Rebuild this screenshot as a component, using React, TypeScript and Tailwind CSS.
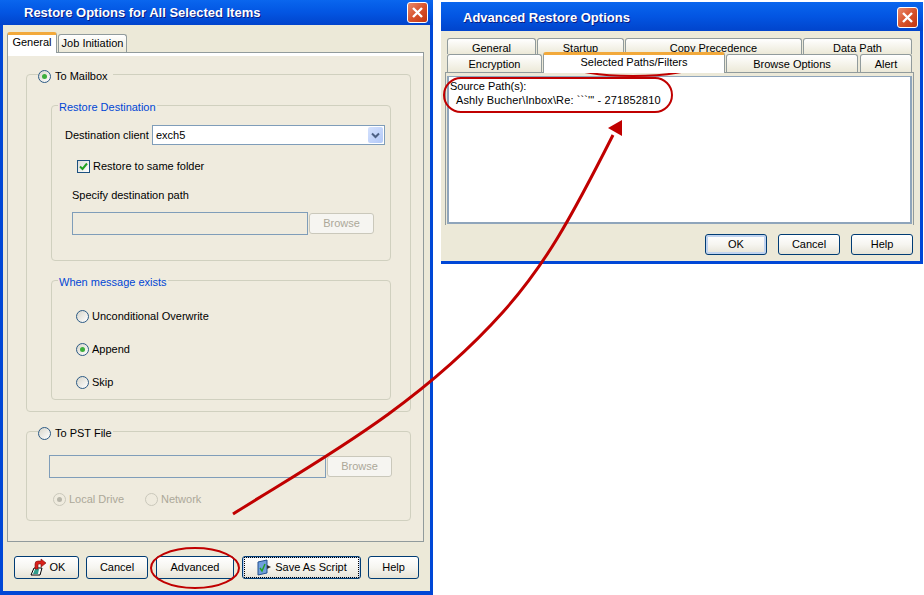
import { ReactNode } from 'react';

const font = 'font-["Liberation_Sans",Arial,sans-serif]';

function CloseButton() {
    return (
        <div className="w-[21px] h-[21px] rounded-[3px] border border-white bg-linear-to-br from-[#e8896a] via-[#d8532c] to-[#c2350d] flex items-center justify-center">
            <svg width="13" height="13" viewBox="0 0 13 13">
                <path d="M2 2 L11 11 M11 2 L2 11" stroke="#fff" strokeWidth="2.4" />
            </svg>
        </div>
    );
}

function TitleBar({ title, className }: { title: string; className: string }) {
    return (
        <div className={`flex items-center justify-between bg-linear-to-b from-[#0a66ee] via-[#0355e2] to-[#0144cc] ${className}`}>
            <span className='font-["Liberation_Sans",Arial,sans-serif] font-bold text-[13px] text-white [text-shadow:1px_1px_0_#0a1a80]'>
                {title}
            </span>
            <CloseButton />
        </div>
    );
}

function Radio({ checked, disabled }: { checked?: boolean; disabled?: boolean }) {
    return (
        <span
            className={`w-[13px] h-[13px] shrink-0 rounded-full border flex items-center justify-center ${
                disabled
                    ? 'border-[#cac8bb] bg-[#efebde]'
                    : 'border-[#2c5a85] bg-linear-to-br from-[#d8d6cb] to-white'
            }`}
        >
            {checked && (
                <span className={`w-[5px] h-[5px] rounded-full ${disabled ? 'bg-[#b8b6aa]' : 'bg-[#3cae3c]'}`} />
            )}
        </span>
    );
}

function RadioRow({ label, checked, disabled }: { label: string; checked?: boolean; disabled?: boolean }) {
    return (
        <div className={`flex items-center gap-[3px] h-[13px] ${disabled ? 'text-[#aca899]' : 'text-black'}`}>
            <Radio checked={checked} disabled={disabled} />
            <span>{label}</span>
        </div>
    );
}

function Group({ className, children }: { className: string; children: ReactNode }) {
    return <div className={`relative border border-[#d0d0bf] rounded-[4px] ${className}`}>{children}</div>;
}

// legend sits on top of the group's border
function Legend({ className, children }: { className: string; children: ReactNode }) {
    return (
        <div className={`absolute h-[14px] flex items-center whitespace-nowrap bg-[#efebde] ${className}`}>{children}</div>
    );
}

function Button({
    children,
    className,
    variant,
}: {
    children: ReactNode;
    className: string;
    variant?: 'default' | 'focus';
}) {
    return (
        <div
            className={`rounded-[3px] border border-[#003c74] bg-linear-to-b from-white via-[#f6f5f0] to-[#e6e3d6] flex items-center justify-center text-black ${
                variant === 'default' ? 'shadow-[inset_0_0_0_2px_#c0d3ef]' : ''
            } ${variant === 'focus' ? 'shadow-[inset_0_0_0_1px_#b5cdf0]' : ''} ${className}`}
        >
            {variant === 'focus' ? (
                <div className="m-[1px] w-full h-full border border-dotted border-black flex items-center justify-center gap-[3px]">
                    {children}
                </div>
            ) : (
                children
            )}
        </div>
    );
}

function DisabledBrowse() {
    return (
        <div className="w-[65px] h-[21px] ml-[1px] rounded-[3px] border border-[#cac8bb] bg-[#f6f5f1] text-[#aca899] flex items-center justify-center">
            Browse
        </div>
    );
}

function OkIcon() {
    return (
        <svg width="20" height="20" viewBox="0 0 20 20" className="mr-[2px]">
            <path d="M3 17 L6 10 L14 10 L12 17 Z" fill="#fff" stroke="#000" />
            <path d="M5 16 L7 11 L11 11 L10 16 Z" fill="#2f9c8a" />
            <path d="M7 11 L7 6 Q7 3 10 3 L13 3 L13 1 L18 5 L13 9 L13 6 L11 6 Q10 6 10 7 L10 11 Z" fill="#d9201a" stroke="#7a0c08" strokeWidth="0.6" />
        </svg>
    );
}

function ScriptIcon() {
    return (
        <svg width="16" height="17" viewBox="0 0 16 17">
            <path d="M2 3 L11 1 L11 14 L2 16 Z" fill="#6f9fdc" stroke="#23508f" />
            <path d="M11 6 L15 8 L11 10 Z" fill="#333" />
            <path d="M4 9 L6 12 L9 5" fill="none" stroke="#1fa31f" strokeWidth="1.4" />
        </svg>
    );
}

function Tab({ label, className }: { label: string; className: string }) {
    return (
        <div
            className={`shrink-0 rounded-t-[3px] border border-b-0 border-[#919b9c] bg-linear-to-b from-white to-[#ece9d8] flex items-center justify-center text-black ${className}`}
        >
            {label}
        </div>
    );
}

function ActiveTab({ label, className }: { label: string; className: string }) {
    return (
        <div
            className={`relative z-10 shrink-0 rounded-t-[3px] border-x border-[#919b9c] border-t-[3px] border-t-[#f2a93b] bg-white flex items-center justify-center text-black ${className}`}
        >
            {label}
        </div>
    );
}

function RestoreWindow() {
    return (
        <div className="absolute left-0 top-0 w-[433px] h-[595px] flex flex-col border-x-[3px] border-b-[4px] border-[#0047d6] bg-[#ece9d8]">
            <TitleBar title="Restore Options for All Selected Items" className="h-[25px] pl-[24px] pr-[5px] -mx-[3px]" />
            <div className="pl-[4px] pr-[6px] pt-[7px]">
                <div className="flex items-end h-[20px]">
                    <ActiveTab label="General" className="w-[50px] h-[21px] -mb-[1px] pb-[4px]" />
                    <Tab label="Job Initiation" className="ml-[1px] w-[69px] h-[18px]" />
                </div>
                <div className="h-[490px] border border-[#919b9c] bg-[#efebde]">
                    <div className="border-t-[3px] border-white pl-[18px] pr-[12px] pt-[18px]">
                        <Group className="h-[338px] pl-[24px] pr-[19px] pt-[30px]">
                            <Legend className="left-[11px] -top-[6px] w-[75px] gap-[4px]">
                                <Radio checked />
                                <span>To Mailbox</span>
                            </Legend>
                            <Group className="h-[156px] pl-[13px] pt-[19px]">
                                <Legend className="left-[6px] -top-[6px] px-[1px] text-[#0046d5]">Restore Destination</Legend>
                                <div className="flex items-center h-[20px]">
                                    <span className="w-[87px]">Destination client</span>
                                    <div className="w-[233px] h-[20px] border border-[#7f9db9] bg-white flex items-center justify-between pl-[3px] pr-[1px]">
                                        <span>exch5</span>
                                        <div className="w-[15px] h-[16px] rounded-[2px] bg-linear-to-br from-[#d5e2fd] to-[#b2c8f8] flex items-center justify-center">
                                            <svg width="9" height="7" viewBox="0 0 9 7">
                                                <path d="M1 1.5 L4.5 5 L8 1.5" fill="none" stroke="#4d6185" strokeWidth="2" />
                                            </svg>
                                        </div>
                                    </div>
                                </div>
                                <div className="flex items-center gap-[3px] h-[13px] mt-[15px] ml-[12px]">
                                    <span className="w-[13px] h-[13px] border border-[#1c5180] bg-linear-to-br from-[#dcdcd7] to-white flex items-center justify-center">
                                        <svg width="9" height="9" viewBox="0 0 9 9">
                                            <path d="M1 4.5 L3.5 7 L8 1.5" fill="none" stroke="#21a121" strokeWidth="2" />
                                        </svg>
                                    </span>
                                    <span>Restore to same folder</span>
                                </div>
                                <div className="h-[14px] mt-[15px] ml-[7px] flex items-center">Specify destination path</div>
                                <div className="flex items-center mt-[10px] ml-[7px]">
                                    <div className="w-[236px] h-[23px] border border-[#7f9db9]" />
                                    <DisabledBrowse />
                                </div>
                            </Group>
                            <Group className="h-[120px] mt-[19px] pl-[24px] pt-[29px] flex flex-col gap-[20px]">
                                <Legend className="left-[6px] -top-[6px] px-[1px] text-[#0046d5]">When message exists</Legend>
                                <RadioRow label="Unconditional Overwrite" />
                                <RadioRow label="Append" checked />
                                <RadioRow label="Skip" />
                            </Group>
                        </Group>
                        <Group className="h-[90px] mt-[19px] pl-[22px] pt-[23px]">
                            <Legend className="left-[11px] -top-[6px] w-[75px] gap-[4px]">
                                <Radio />
                                <span>To PST File</span>
                            </Legend>
                            <div className="flex items-center">
                                <div className="w-[277px] h-[23px] border border-[#7f9db9]" />
                                <DisabledBrowse />
                            </div>
                            <div className="flex mt-[15px] ml-[4px]">
                                <div className="w-[92px]">
                                    <RadioRow label="Local Drive" checked disabled />
                                </div>
                                <RadioRow label="Network" disabled />
                            </div>
                        </Group>
                    </div>
                </div>
                <div className="flex items-center mt-[14px] ml-[7px] h-[23px]">
                    <Button className="w-[65px] h-[23px]">
                        <OkIcon />
                        OK
                    </Button>
                    <Button className="w-[62px] h-[23px] ml-[7px]">Cancel</Button>
                    <Button className="w-[78px] h-[23px] ml-[8px]">Advanced</Button>
                    <Button className="w-[119px] h-[23px] ml-[8px]" variant="focus">
                        <ScriptIcon />
                        Save As Script
                    </Button>
                    <Button className="w-[51px] h-[23px] ml-[7px]">Help</Button>
                </div>
            </div>
        </div>
    );
}

function AdvancedWindow() {
    return (
        <div className="absolute left-[441px] top-[2px] w-[482px] h-[262px] flex flex-col border-r-[3px] border-b-[3px] border-[#0047d6] bg-[#ece9d8]">
            <TitleBar title="Advanced Restore Options" className="h-[29px] pt-[2px] pl-[22px] pr-[5px] -mr-[3px]" />
            <div className="pl-[4px] pr-[6px] pt-[7px]">
                <div className="flex gap-[1px] pl-[2px] h-[16px]">
                    <Tab label="General" className="w-[89px] h-[16px] pt-[4px]" />
                    <Tab label="Startup" className="w-[87px] h-[16px] pt-[4px]" />
                    <Tab label="Copy Precedence" className="w-[177px] h-[16px] pt-[4px]" />
                    <Tab label="Data Path" className="w-[109px] h-[16px] pt-[4px]" />
                </div>
                <div className="flex items-end gap-[1px] pl-[2px] h-[18px]">
                    <Tab label="Encryption" className="w-[95px] h-[18px] pt-[2px]" />
                    <ActiveTab label="Selected Paths/Filters" className="w-[182px] h-[21px] -mb-[1px] pb-[3px]" />
                    <Tab label="Browse Options" className="w-[132px] h-[18px] pt-[2px]" />
                    <Tab label="Alert" className="w-[52px] ml-[1px] h-[18px] pt-[2px]" />
                </div>
                <div className="w-[469px] h-[153px] border-t border-x border-[#919b9c] pt-[3px] px-[1px]">
                    <div className="h-[148px] border-2 border-t-[1px] border-[#8fa5bb] bg-white pl-[1px] pt-[2px] leading-[14px] text-black">
                        <div>Source Path(s):</div>
                        <div className="pl-[6px] tracking-[0.12px]">Ashly Bucher\Inbox\Re: ```'" - 271852810</div>
                    </div>
                </div>
                <div className="flex justify-end gap-[11px] mt-[9px] pr-[1px] w-[469px]">
                    <Button className="w-[62px] h-[21px]" variant="default">OK</Button>
                    <Button className="w-[62px] h-[21px]">Cancel</Button>
                    <Button className="w-[62px] h-[21px]">Help</Button>
                </div>
            </div>
        </div>
    );
}

export default function App() {
    return (
        <div className={`relative w-[924px] h-[595px] overflow-hidden bg-white text-[11px] leading-none ${font}`}>
            <RestoreWindow />
            <AdvancedWindow />
            {/* red callouts drawn over the screenshot */}
            <svg className="absolute left-0 top-0 pointer-events-none" width="924" height="595" viewBox="0 0 924 595">
                <ellipse cx="195" cy="568" rx="44" ry="20" fill="none" stroke="#c00000" strokeWidth="2" />
                <ellipse cx="633" cy="65" rx="62" ry="11" fill="none" stroke="#c00000" strokeWidth="2" />
                <rect x="444" y="78" width="228" height="34" rx="17" fill="none" stroke="#c00000" strokeWidth="2" />
                <path d="M233 514 C 310 465, 415 410, 503 312 C 545 265, 570 220, 613 135" fill="none" stroke="#c00000" strokeWidth="3" />
                <path d="M622 120 L608 128 L622 136 Z" fill="#c00000" />
            </svg>
        </div>
    );
}
